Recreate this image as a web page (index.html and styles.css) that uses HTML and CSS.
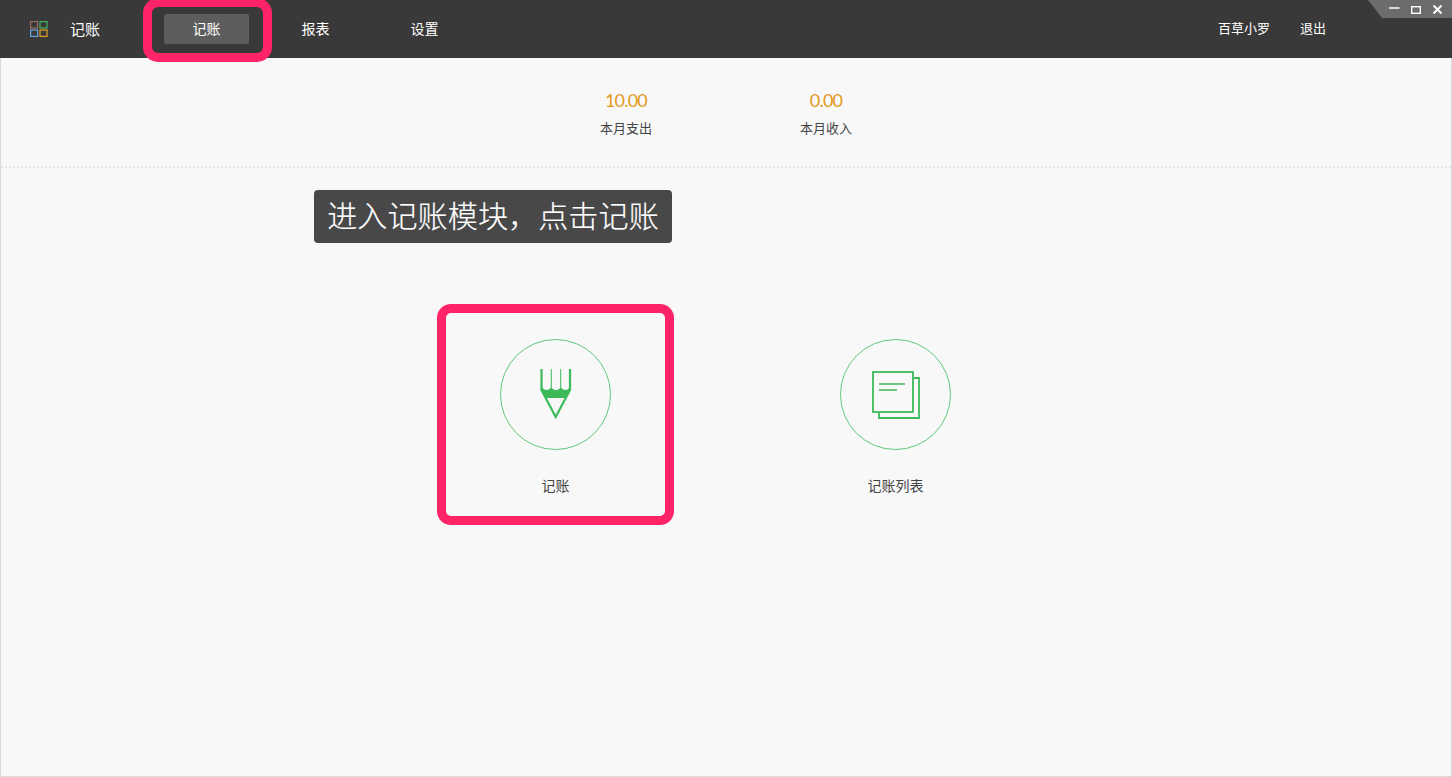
FILE: index.html
```html
<!DOCTYPE html>
<html lang="zh">
<head>
<meta charset="utf-8">
<title>记账</title>
<link rel="stylesheet" href="styles.css">
</head>
<body>
<div class="app">
  <header class="topbar">
    <div class="brand">
      <svg class="logo" width="18" height="16" viewBox="0 0 18 16" fill="none" stroke-width="1.2">
        <rect x="0.6" y="0.6" width="7" height="6.4" stroke="#9a6a5e"/>
        <rect x="10" y="0.6" width="7" height="6.4" stroke="#41b562"/>
        <rect x="0.6" y="9" width="7" height="6.4" stroke="#62a6de"/>
        <rect x="10" y="9" width="7" height="6.4" stroke="#e3a021"/>
      </svg>
      <span class="brand-name">记账</span>
    </div>
    <nav class="nav">
      <a class="nav-item active">记账</a>
      <a class="nav-item">报表</a>
      <a class="nav-item">设置</a>
    </nav>
    <div class="user">
      <span>百草小罗</span>
      <span>退出</span>
    </div>
    <div class="winctl">
      <svg width="56" height="14" viewBox="0 0 56 14" fill="none" stroke="#fff">
        <path d="M0 6H10.500" stroke-width="1.600"/>
        <rect x="22.700" y="4.700" width="8.600" height="6.600" stroke-width="1.400"/>
        <path d="M44.500 3.500L52.500 11.500M52.500 3.500L44.500 11.500" stroke-width="2"/>
      </svg>
    </div>
  </header>
  <main class="content">
    <section class="stats">
      <div class="stat">
        <div class="stat-value">10.00</div>
        <div class="stat-label">本月支出</div>
      </div>
      <div class="stat">
        <div class="stat-value">0.00</div>
        <div class="stat-label">本月收入</div>
      </div>
    </section>
    <section class="tiles">
      <div class="tile">
        <div class="circle">
          <svg class="icon-pen" width="32" height="50" viewBox="0 0 32 50" fill="none" stroke="#3cba59">
            <path d="M1.500 0V21M30 0V21" stroke-width="2.200"/>
            <path d="M11.300 0V18M20.700 0V18" stroke-width="1"/>
            <path d="M1 20L15.700 48L30.500 20" stroke-width="2.200"/>
            <path d="M2 17Q3 21 6.500 21Q10.500 21 11.300 17Q12 21 16 21Q20 21 20.700 17Q21.500 21 25.500 21Q29 21 29.500 17L30.500 20L26 29H5.500L1 20Z" fill="#3cba59" stroke="none"/>
          </svg>
        </div>
        <div class="tile-label">记账</div>
      </div>
      <div class="tile">
        <div class="circle">
          <svg width="48" height="48" viewBox="0 0 48 48" fill="none" stroke="#3cba59" stroke-width="1.800">
            <path d="M42 7H47V47H7V42"/>
            <rect x="1" y="1" width="40" height="40"/>
            <path d="M7 13H33M7 19H25" stroke-width="1.600"/>
          </svg>
        </div>
        <div class="tile-label">记账列表</div>
      </div>
    </section>
  </main>
  <div class="callout">进入记账模块，点击记账</div>
  <div class="mark mark-nav"></div>
  <div class="mark mark-tile"></div>
</div>
</body>
</html>
```
FILE: styles.css
```css
* { box-sizing: border-box; }
html, body { margin: 0; padding: 0; height: 100%; overflow: hidden; }
body { font-family: "Noto Sans CJK SC", "Liberation Sans", sans-serif; background: #f8f8f8; color: #444; }
.app { position: relative; width: 1452px; height: 777px; display: flex; flex-direction: column; }
.topbar { flex: none; height: 58px; background: #393939; color: #fff; display: flex; align-items: center; font-size: 13px; padding-left: 30px; position: relative; }
.brand { display: flex; align-items: center; width: 134px; }
.logo { flex: none; margin-right: 22px; }
.brand-name { font-size: 15px; line-height: 20px; margin-top: -1px; }
.nav { display: flex; gap: 24px; }
.nav-item { width: 85px; height: 30px; line-height: 28px; font-size: 14px; text-align: center; border-radius: 2px; }
.nav-item.active { background: #5d5d5d; }
.user { margin-left: auto; display: flex; gap: 30px; padding-right: 126px; line-height: 18px; margin-top: -3px; }
.winctl { position: absolute; top: 0; right: 0; width: 84px; height: 18px; background: #6c6c6c; clip-path: polygon(0 0, 100% 0, 100% 100%, 14px 100%); display: flex; justify-content: flex-end; align-items: center; padding-right: 7px; }
.content { flex: 1; border: 1px solid #dcdcdc; border-top: 0; display: flex; flex-direction: column; align-items: center; background: #f8f8f8; }
.stats { align-self: stretch; height: 110px; border-bottom: 2px dotted #e6e6e6; display: flex; justify-content: center; gap: 148px; padding-top: 30px; }
.stat { width: 52px; text-align: center; white-space: nowrap; display: flex; flex-direction: column; align-items: center; }
.stat-value { font-family: "Lato", sans-serif; font-size: 18px; letter-spacing: -0.8px; line-height: 25px; color: #e39a1c; }
.stat-label { font-size: 13px; line-height: 20px; margin-top: 5px; color: #444; }
.tiles { display: flex; gap: 229px; padding-top: 171px; padding-right: 1px; }
.tile { width: 111px; display: flex; flex-direction: column; align-items: center; }
.circle { width: 111px; height: 111px; border: 1px solid #5fc97c; border-radius: 50%; display: flex; align-items: center; justify-content: center; }
.icon-pen { margin-bottom: 1px; }
.tile-label { font-size: 14px; line-height: 20px; margin-top: 25px; white-space: nowrap; color: #444; }
.callout { position: absolute; left: 314px; top: 190px; width: 358px; height: 53px; background: #484848; border-radius: 4px; color: #fff; font-size: 30px; font-weight: 300; -webkit-text-stroke: 0.2px #fff; letter-spacing: 0.15px; line-height: 49px; text-align: center; white-space: nowrap; }
.mark { position: absolute; border: 9px solid #ff2468; }
.mark-nav { left: 143px; top: -2px; width: 129px; height: 64px; border-radius: 15px; }
.mark-tile { left: 437px; top: 304px; width: 237px; height: 221px; border-radius: 14px; }
```
